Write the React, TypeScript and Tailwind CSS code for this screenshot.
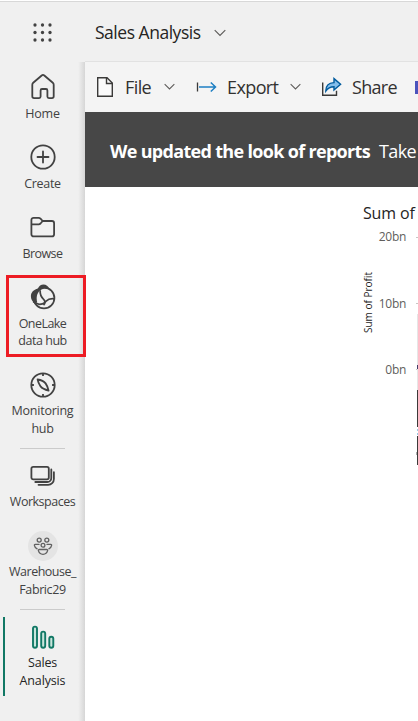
import type { ReactNode } from "react";

const ink = "#424242";

function Chevron({ className = "", size = 12 }: { className?: string; size?: number }) {
  return (
    <svg className={className} width={size} height={(size * 8) / 12} viewBox="0 0 12 8" fill="none">
      <path d="M.7 1.2 6 6.5l5.3-5.3" stroke="#5c5a58" strokeWidth="1.1" />
    </svg>
  );
}

function HomeIcon() {
  return (
    <svg width="28" height="28" viewBox="0 0 28 28" fill="none" stroke={ink} strokeWidth="1.8">
      <path d="M3.3 11.7c0-.8.3-1.4.9-1.9l8.500-7.300c.8-.7 1.800-.7 2.600 0l8.500 7.300c.6.5.9 1.100.9 1.900v11.600c0 1-.8 1.800-1.800 1.800h-3c-.9 0-1.500-.7-1.500-1.500v-6.200c0-.8-.6-1.400-1.400-1.400h-4c-.8 0-1.400.6-1.400 1.400v6.200c0 .8-.6 1.500-1.500 1.500h-5c-1 0-1.800-.8-1.800-1.800Z" />
    </svg>
  );
}

function CreateIcon() {
  return (
    <svg width="28" height="28" viewBox="0 0 28 28" fill="none" stroke={ink} strokeWidth="1.8" strokeLinecap="round">
      <circle cx="14" cy="14" r="11.7" />
      <path d="M14 8.500v11M8.500 14h11" />
    </svg>
  );
}

function BrowseIcon() {
  return (
    <svg width="28" height="28" viewBox="0 0 28 28" fill="none" stroke={ink} strokeWidth="1.8" strokeLinejoin="round">
      <path d="M2.400 7a2.200 2.200 0 0 1 2.200-2.200h5.100c.7 0 1.300.3 1.800.8L13.700 8h9.200a2.200 2.200 0 0 1 2.200 2.200v11a2.200 2.200 0 0 1-2.200 2.200H4.600a2.200 2.200 0 0 1-2.200-2.200Z" />
      <path d="M2.400 11.300h7.300c.7 0 1.300-.3 1.800-.8L13.700 8" />
    </svg>
  );
}

function OneLakeIcon() {
  return (
    <svg width="28" height="28" viewBox="0 0 28 28" fill="none" stroke={ink} strokeWidth="1.750">
      <circle cx="15" cy="15" r="10.400" />
      <path d="M8.800 5.700C9.800 2.900 12 1.400 14.500 1.400c2.600 0 4.900 1.600 5.800 4.500-3.600-1-6.700-.4-9 1.400-3.500 2.800-4.300 7.200-3 12.300l-2.800 1C3.100 18.300 1.900 16 1.900 13.300c0-3.900 2.800-6.900 6.900-7.600Z" fill={ink} stroke="none" />
      <path d="M11.100 7.300c-.1 4.100.8 6.500 3.100 8.500 2 1.800 2.500 4.200.3 6.300" />
      <path d="M4.300 18.700c2.900 2.500 5.800 3.200 9.100 2.200 1.600-.5 2.300-1.400 3.400-2.500 2.300-2.200 4.800-3 8.300-2.600" />
    </svg>
  );
}

function MonitoringIcon() {
  return (
    <svg width="28" height="28" viewBox="0 0 28 28" fill="none" stroke={ink} strokeWidth="1.800" strokeLinejoin="round">
      <circle cx="14" cy="14" r="11.700" />
      <path d="M14 2.500v2.400M14 23.100v2.400M2.500 14h2.400M23.100 14h2.400" />
      <path d="M8.600 8.500c3.700.4 6.400 1.700 8 3.900 1.400 2 2.400 4.300 3 7.200-3.600-.9-6.400-2.100-8-4.200-1.400-2-2.500-4.200-3-6.900Z" />
    </svg>
  );
}

function WorkspacesIcon() {
  return (
    <svg width="28" height="28" viewBox="0 0 28 28" fill="none" stroke={ink} strokeWidth="1.800" strokeLinecap="round">
      <rect x="2.400" y="4.900" width="17.400" height="12.400" rx="1.800" />
      <path d="M22.300 7.500v8.500a4 4 0 0 1-4 4H6.300M24.900 10.200v6.800a5.800 5.800 0 0 1-5.800 5.800H9.500" />
    </svg>
  );
}

function WarehouseIcon() {
  return (
    <span className="-my-px flex size-[30px] items-center justify-center rounded-full bg-[#e4e4e4]">
      <svg width="20" height="20" viewBox="0 0 20 20" fill="none" stroke="#616161" strokeWidth="1.300" strokeLinecap="round">
        <circle cx="6.200" cy="4.100" r="2" />
        <circle cx="13.800" cy="4.100" r="2" />
        <circle cx="10" cy="9.300" r="1.900" />
        <path d="M6 8.400H2.200c-.6 0-.9.400-.8 1 .3 1.700 1.200 2.800 2.700 3.400M14 8.400h3.800c.6 0 .9.400.8 1-.3 1.700-1.200 2.800-2.700 3.400" />
        <path d="M6.300 13.500h7.400c.7 0 1.100.5.900 1.200-.5 2.100-2.200 3.600-4.600 3.600s-4.100-1.500-4.600-3.600c-.2-.7.200-1.200.9-1.200Z" />
      </svg>
    </span>
  );
}

function ReportIcon() {
  return (
    <svg width="28" height="28" viewBox="0 0 28 28" fill="#c9e5dc" stroke="#117865" strokeWidth="1.900">
      <rect x="4" y="3.600" width="4" height="21.200" rx="2" />
      <rect x="12.200" y="8.600" width="4" height="16.200" rx="2" />
      <rect x="20.300" y="13.800" width="4" height="11" rx="2" />
    </svg>
  );
}

function NavItem({
  icon,
  lines,
  className,
  gap = "mb-[3px]",
  children,
}: {
  icon: ReactNode;
  lines: [string, string][];
  className: string;
  gap?: string;
  children?: ReactNode;
}) {
  return (
    <div className={`relative flex w-full shrink-0 flex-col items-center pt-[11px] text-[12.500px] leading-[17.500px] ${className}`}>
      <span className={`flex h-7 items-center justify-center ${gap}`}>{icon}</span>
      {lines.map(([text, tracking]) => (
        <span key={text} className={`whitespace-nowrap ${tracking}`}>{text}</span>
      ))}
      {children}
    </div>
  );
}

function Divider({ className }: { className: string }) {
  return <div className={`h-px w-[45px] shrink-0 bg-[#cbcbcb] ${className}`} />;
}

function Sidebar() {
  return (
    <nav className="flex w-[85px] shrink-0 flex-col items-center bg-gradient-to-r from-[#f0f0f0] from-92% to-[#d6d6d6] text-[#424242]">
      <NavItem icon={<HomeIcon />} gap="mb-[4px]" lines={[["Home", "tracking-[-0.250px]"]]} className="h-[70px]" />
      <NavItem icon={<CreateIcon />} gap="mb-[4px]" lines={[["Create", "tracking-[-0.300px]"]]} className="h-[70px]" />
      <NavItem icon={<BrowseIcon />} gap="mb-[4px]" lines={[["Browse", "tracking-[-0.600px]"]]} className="h-[70px]" />
      <NavItem
        icon={<OneLakeIcon />}
        gap="mb-[4px]"
        lines={[["OneLake", "tracking-[-0.550px]"], ["data hub", "-mt-px tracking-[-0.450px]"]]}
        className="h-[88px]"
      >
        <span className="absolute top-[3px] left-[6px] z-10 h-[82px] w-[80px] border-3 border-[#ed1c24]" />
      </NavItem>
      <NavItem
        icon={<MonitoringIcon />}
        lines={[["Monitoring", "tracking-[-0.250px]"], ["hub", "tracking-[-0.300px]"]]}
        className="-mt-px h-[88px] pt-[12px]"
      />
      <Divider className="mt-px mb-[2px]" />
      <NavItem icon={<WorkspacesIcon />} lines={[["Workspaces", "tracking-[-0.500px]"]]} className="h-[70px]" />
      <NavItem
        icon={<WarehouseIcon />}
        lines={[["Warehouse_", "tracking-[-0.500px]"], ["Fabric29", "tracking-[-0.400px]"]]}
        className="h-[87px]"
      />
      <Divider className="mt-px mb-[2px]" />
      <NavItem
        icon={<ReportIcon />}
        lines={[["Sales", "tracking-[-0.200px]"], ["Analysis", "tracking-[-0.150px]"]]}
        className="h-[88px] text-[#242424]"
      >
        <span className="absolute top-[5px] left-[3px] h-[79px] w-[2px] bg-[#117865]" />
      </NavItem>
    </nav>
  );
}

function Header() {
  return (
    <header className="shrink-0 border-t border-white">
      <div className="flex h-[61px] items-center border-t border-[#d8d8d8]">
        <svg className="ml-[32px]" width="21" height="21" viewBox="0 0 21 21" fill={ink}>
          {[3, 10.5, 18].map((y) => [3, 10.5, 18].map((x) => <circle key={`${x}-${y}`} cx={x} cy={y} r="1.650" />))}
        </svg>
        <span className="ml-[42px] w-[107px] text-[17.500px] tracking-[-0.480px] whitespace-nowrap text-[#252423]">
          Sales Analysis
        </span>
        <Chevron className="mt-[2px] ml-[12px]" />
      </div>
    </header>
  );
}

function Toolbar() {
  return (
    <div className="flex h-[50px] shrink-0 items-center bg-[#f4f4f4] text-[18px] whitespace-nowrap text-[#323130]">
      <svg className="ml-[11px] shrink-0" width="18" height="22" viewBox="0 0 18 22" fill="#fafafa" stroke="#3b3a39" strokeWidth="1.400">
        <path d="M1.700 1.700h9.300l5.300 5.300v13.300H1.700Z" />
        <path d="M10.500 1.700V7.500h5.800" fill="none" />
      </svg>
      <span className="ml-[11px] w-[28px] shrink-0 pt-px tracking-[-0.600px]">File</span>
      <Chevron className="ml-[11px] shrink-0" size={11} />
      <svg className="ml-[21px] shrink-0" width="22" height="14" viewBox="0 0 22 14" fill="none">
        <path d="M1.500 2.500v9" stroke="#3b3a39" strokeWidth="1.300" />
        <path d="M3 7h16.500M14.800 2.500 19.500 7l-4.700 4.500" stroke="#1e7fc3" strokeWidth="1.500" />
      </svg>
      <span className="ml-[9px] w-[51px] shrink-0 pt-px tracking-[-0.600px]">Export</span>
      <Chevron className="ml-[12px] shrink-0" size={11} />
      <svg className="ml-[20px] shrink-0" width="22" height="20" viewBox="0 0 22 20" fill="none">
        <path d="M1.700 5.500v12.800H15.500v-4.500" stroke="#3b3a39" strokeWidth="1.400" />
        <path d="M4.800 14c0-5.500 3-8.200 8.200-8.400V1.600l6.600 5.700-6.600 5.700V9.700c-3.700 0-6.100 1.200-8.200 4.300Z" fill="#83beec" stroke="#005b9e" strokeWidth="1.400" />
      </svg>
      <span className="ml-[9px] w-[44px] shrink-0 pt-px tracking-[-0.700px]">Share</span>
      <span className="ml-[19px] h-[13px] w-[10px] shrink-0 bg-[#4b53bc]" />
    </div>
  );
}

function Chart() {
  return (
    <section className="relative h-[534px] text-[#252423]">
      <div className="flex flex-col pt-[15px] pl-[277px]">
        <h2 className="w-[60px] pl-px text-[16px] leading-[22px] tracking-[-0.150px] whitespace-nowrap">Sum of</h2>
        <div className="flex h-[160px]">
          <div className="flex w-[11px] items-center justify-center pb-[5px]">
            <span className="h-[63px] rotate-180 text-[10px] leading-[12px] whitespace-nowrap [writing-mode:vertical-rl]">
              Sum of Profit
            </span>
          </div>
          <div className="flex w-[33px] flex-col items-end gap-[50.500px] pt-[5px] text-[12px] leading-[16px] tracking-[-0.300px] text-[#605e5c]">
            <span>20bn</span>
            <span>10bn</span>
            <span>0bn</span>
          </div>
        </div>
      </div>
      <svg className="absolute top-0 right-0" width="4" height="300" viewBox="0 0 4 300">
        <path d="M2 50.500h2M2 116.500h2M2 182.500h2" stroke="#c8c6c4" />
        <path d="M3.500 127v76" stroke="#e6e6e6" />
        <path d="M3.500 178v4" stroke="#433c68" />
        <path d="M3.500 203v37M3.500 249v29" stroke="#3b3a39" />
        <path d="M3.500 242v2M3.500 246v2" stroke="#9bcbe5" />
        <path d="M2.500 265v3" stroke="#aaa" />
      </svg>
    </section>
  );
}

export default function App() {
  return (
    <div className="flex h-[721px] w-[418px] flex-col overflow-hidden bg-[#f0f0f0] font-['Open_Sans','Noto_Sans',sans-serif]">
      <Header />
      <div className="flex min-h-0 flex-1">
        <Sidebar />
        <main className="min-w-0 flex-1 overflow-hidden bg-white shadow-[0_-1px_0_#e2e2e2]">
          <Toolbar />
          <div className="flex h-[75px] items-center bg-[#474747] pt-[3px] pl-[25px] text-[18px] whitespace-nowrap text-white">
            <strong className="w-[260px] font-bold tracking-[-0.680px]">We updated the look of reports</strong>
            <span className="ml-[9px] tracking-[-0.600px]">Take</span>
          </div>
          <Chart />
        </main>
      </div>
    </div>
  );
}
